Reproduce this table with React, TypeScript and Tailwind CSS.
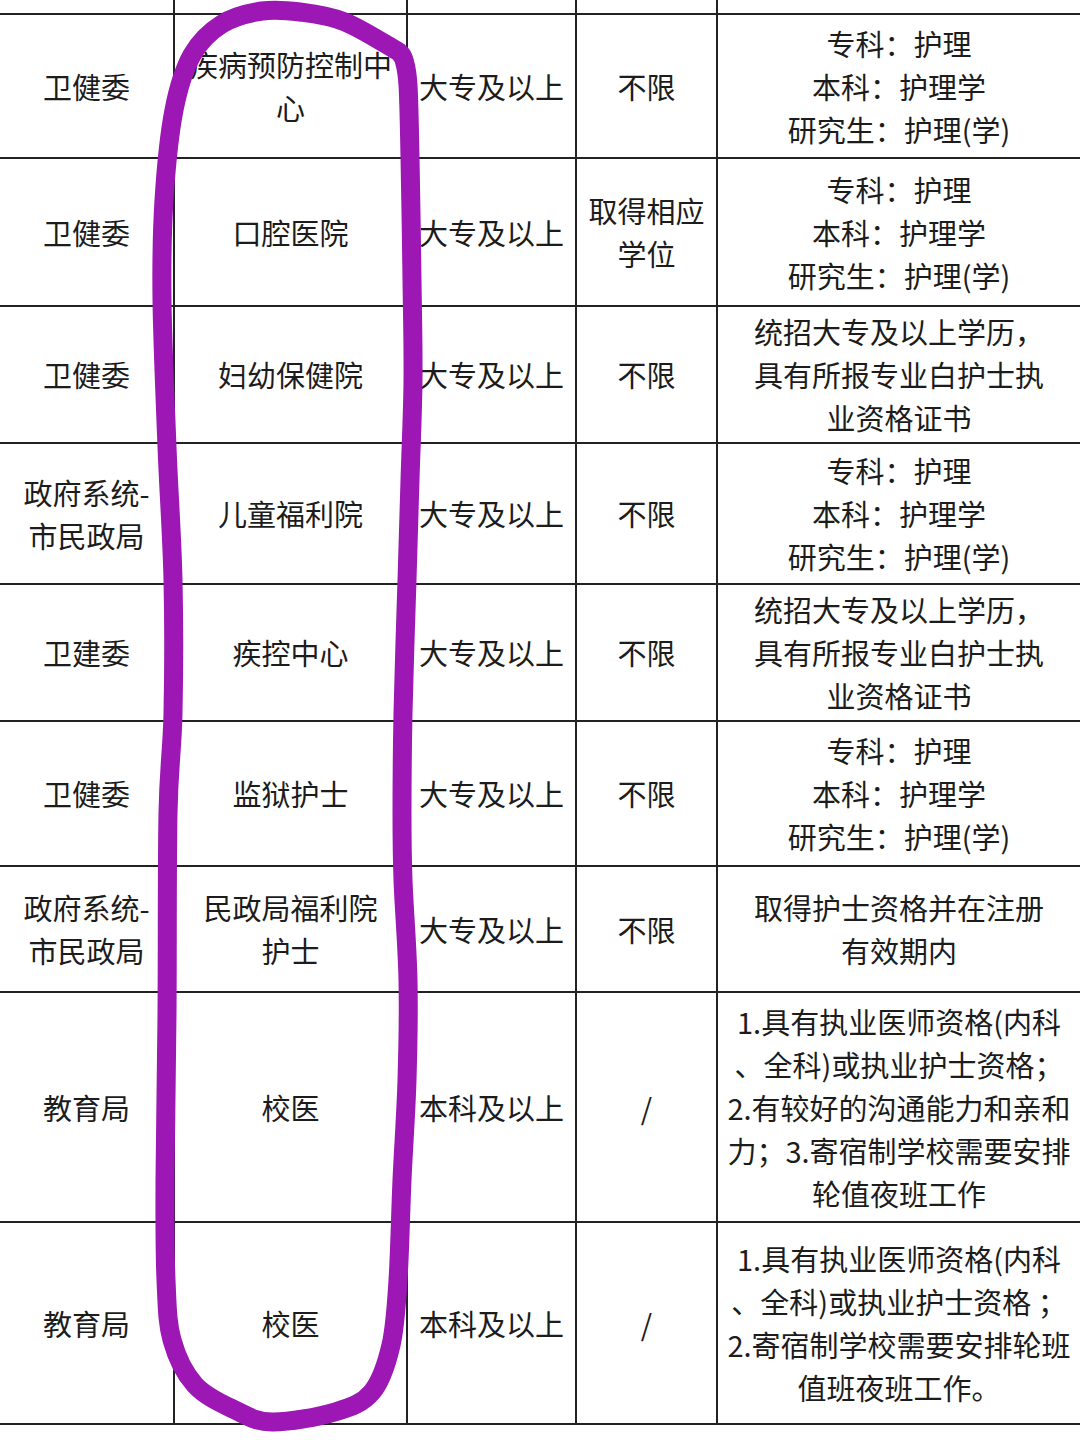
import React from "react";

type Row = { h: number; cells: string[][] };

const nursing = ["专科：护理", "本科：护理学", "研究生：护理(学)"];
const tongzhao = ["统招大专及以上学历，", "具有所报专业白护士执", "业资格证书"];

const rows: Row[] = [
  { h: 144, cells: [["卫健委"], ["疾病预防控制中", "心"], ["大专及以上"], ["不限"], nursing] },
  { h: 148, cells: [["卫健委"], ["口腔医院"], ["大专及以上"], ["取得相应", "学位"], nursing] },
  { h: 137, cells: [["卫健委"], ["妇幼保健院"], ["大专及以上"], ["不限"], tongzhao] },
  { h: 141, cells: [["政府系统-", "市民政局"], ["儿童福利院"], ["大专及以上"], ["不限"], nursing] },
  { h: 137, cells: [["卫建委"], ["疾控中心"], ["大专及以上"], ["不限"], tongzhao] },
  { h: 145, cells: [["卫健委"], ["监狱护士"], ["大专及以上"], ["不限"], nursing] },
  { h: 126, cells: [["政府系统-", "市民政局"], ["民政局福利院", "护士"], ["大专及以上"], ["不限"], ["取得护士资格并在注册", "有效期内"]] },
  {
    h: 230,
    cells: [
      ["教育局"],
      ["校医"],
      ["本科及以上"],
      ["/"],
      ["1.具有执业医师资格(内科", "、全科)或执业护士资格；", "2.有较好的沟通能力和亲和", "力；3.寄宿制学校需要安排", "轮值夜班工作"],
    ],
  },
  {
    h: 202,
    cells: [
      ["教育局"],
      ["校医"],
      ["本科及以上"],
      ["/"],
      ["1.具有执业医师资格(内科", "、全科)或执业护士资格 ；", "2.寄宿制学校需要安排轮班", "值班夜班工作。"],
    ],
  },
];

const widths = ["w-[175px]", "w-[233px]", "w-[169px]", "w-[141px]", "flex-1"];

const loopPts: [number, number][] = [
  [399, 52],
  [345, 22],
  [300, 12],
  [262, 11],
  [222, 24],
  [192, 55],
  [174, 110],
  [164, 200],
  [162, 300],
  [167, 447],
  [173, 580],
  [173, 713],
  [168, 813],
  [167, 1013],
  [165, 1180],
  [166, 1280],
  [172, 1340],
  [195, 1385],
  [235, 1410],
  [272, 1422],
  [335, 1412],
  [372, 1392],
  [391, 1345],
  [398, 1280],
  [402, 1180],
  [407, 1080],
  [408, 980],
  [403, 880],
  [402, 813],
  [403, 713],
  [407, 580],
  [410, 480],
  [413, 380],
  [412, 280],
  [410, 157],
  [408, 85],
  [404, 60],
  [399, 52],
];

function catmull(pts: [number, number][]): string {
  let d = `M ${pts[0][0]} ${pts[0][1]}`;
  for (let i = 0; i < pts.length - 1; i++) {
    const p0 = pts[i - 1] || pts[i];
    const p1 = pts[i];
    const p2 = pts[i + 1];
    const p3 = pts[i + 2] || p2;
    const c1x = p1[0] + (p2[0] - p0[0]) / 6;
    const c1y = p1[1] + (p2[1] - p0[1]) / 6;
    const c2x = p2[0] - (p3[0] - p1[0]) / 6;
    const c2y = p2[1] - (p3[1] - p1[1]) / 6;
    d += ` C ${c1x.toFixed(1)} ${c1y.toFixed(1)} ${c2x.toFixed(1)} ${c2y.toFixed(1)} ${p2[0]} ${p2[1]}`;
  }
  return d;
}

export default function App() {
  return (
    <div
      className="relative w-[1080px] h-[1440px] bg-white overflow-hidden text-[#1c1c1c]"
      style={{ fontFamily: '"Noto Sans CJK SC", "Noto Sans", sans-serif' }}
    >
      <div className="flex flex-col">
        <div className="flex h-[15px] border-b-2 border-[#222]">
          {widths.map((w, i) => (
            <div key={i} className={`${w} ${i < 4 ? "border-r-2 border-[#222]" : ""}`} />
          ))}
        </div>
        {rows.map((r, ri) => (
          <div key={ri} className="flex border-b-2 border-[#222]" style={{ height: r.h }}>
            {r.cells.map((lines, ci) => (
              <div
                key={ci}
                className={`${widths[ci]} ${ci < 4 ? "border-r-2 border-[#222]" : ""} flex flex-col items-center justify-center overflow-hidden text-[29px] leading-[43px] whitespace-nowrap`}
              >
                {lines.map((l, li) => (
                  <span key={li}>{l}</span>
                ))}
              </div>
            ))}
          </div>
        ))}
      </div>
      <svg
        className="absolute inset-0 pointer-events-none"
        width="1080"
        height="1440"
        viewBox="0 0 1080 1440"
      >
        <path
          d={catmull(loopPts)}
          fill="none"
          stroke="#9c17b4"
          strokeWidth="19"
          strokeLinecap="round"
          strokeLinejoin="round"
        />
      </svg>
    </div>
  );
}
